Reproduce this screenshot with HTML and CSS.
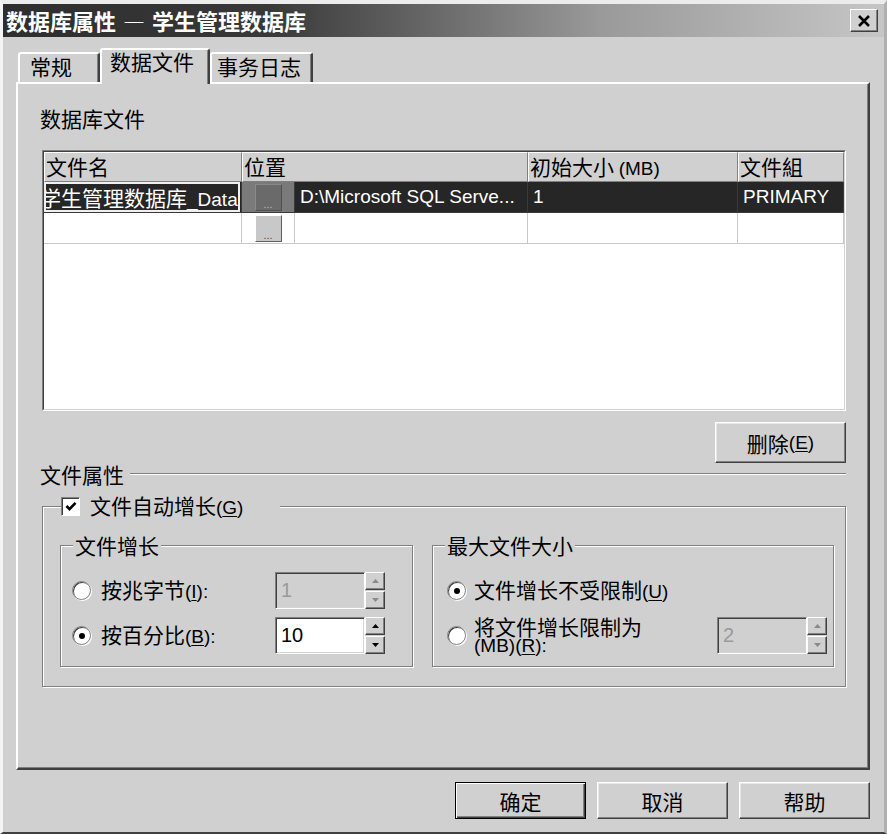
FILE: index.html
```html
<!DOCTYPE html>
<html lang="zh-CN">
<head>
<meta charset="utf-8">
<title>数据库属性</title>
<link rel="stylesheet" href="styles.css">
</head>
<body>
<div class="window">
  <div class="titlebar">
    <span class="title">数据库属性 — 学生管理数据库</span>
    <div class="close"><svg width="14" height="12" viewBox="0 0 14 12"><path d="M2 1 L12 11 M12 1 L2 11" stroke="#000" stroke-width="2.6" fill="none"/></svg></div>
  </div>
  <div class="tabs">
    <div class="tab t1">常规</div>
    <div class="tab t2">数据文件</div>
    <div class="tab t3">事务日志</div>
  </div>
  <div class="panel">
    <div class="label">数据库文件</div>
    <div class="grid">
      <div class="gridin">
        <div class="grow head">
          <div class="c c1">文件名</div>
          <div class="c c2">位置</div>
          <div class="c c3">初始大小 <span class="lt">(MB)</span></div>
          <div class="c c4">文件組</div>
        </div>
        <div class="grow sel">
          <div class="c c1"><div class="edit"><span class="et">学生管理数据库<span class="lt">_Data</span></span></div></div>
          <div class="c c2"><div class="bc"><div class="eb">...</div></div><div class="loc lt">D:\Microsoft SQL Serve...</div></div>
          <div class="c c3 lt">1</div>
          <div class="c c4 lt">PRIMARY</div>
        </div>
        <div class="grow">
          <div class="c c1"></div>
          <div class="c c2"><div class="bc"><div class="eb">...</div></div><div class="loc"></div></div>
          <div class="c c3"></div>
          <div class="c c4"></div>
        </div>
      </div>
    </div>
    <div class="actions"><div class="btn">删除<span class="lt">(<u>E</u>)</span></div></div>
    <div class="sep"><span>文件属性</span><i class="line"></i></div>
    <fieldset class="outer">
      <legend class="olegend">
        <span class="check"><svg width="12" height="11" viewBox="0 0 12 11"><path d="M1.5 5 L4.5 8.2 L10.5 1.8" stroke="#000" stroke-width="2.6" fill="none"/></svg></span>
        <span>文件自动增长<span class="lt">(<u>G</u>)</span></span>
      </legend>
      <div class="groups">
        <fieldset class="inner g1">
          <legend class="ilegend">文件增长</legend>
          <div class="opt">
            <span class="radio"></span>
            <span class="olabel">按兆字节<span class="lt">(<u>I</u>):</span></span>
            <div class="spin dis">
              <div class="field">1</div>
              <div class="arrows">
                <div class="arrow"><svg width="7" height="4" viewBox="0 0 7 4"><polygon points="0,4 3.5,0 7,4" fill="#8a8a8a"/></svg></div>
                <div class="arrow"><svg width="7" height="4" viewBox="0 0 7 4"><polygon points="0,0 3.5,4 7,0" fill="#8a8a8a"/></svg></div>
              </div>
            </div>
          </div>
          <div class="opt">
            <span class="radio on"></span>
            <span class="olabel">按百分比<span class="lt">(<u>B</u>):</span></span>
            <div class="spin">
              <div class="field">10</div>
              <div class="arrows">
                <div class="arrow"><svg width="7" height="4" viewBox="0 0 7 4"><polygon points="0,4 3.5,0 7,4" fill="#000"/></svg></div>
                <div class="arrow"><svg width="7" height="4" viewBox="0 0 7 4"><polygon points="0,0 3.5,4 7,0" fill="#000"/></svg></div>
              </div>
            </div>
          </div>
        </fieldset>
        <fieldset class="inner g2">
          <legend class="ilegend">最大文件大小</legend>
          <div class="opt">
            <span class="radio on"></span>
            <span class="olabel">文件增长不受限制<span class="lt">(<u>U</u>)</span></span>
          </div>
          <div class="opt">
            <span class="radio"></span>
            <span class="olabel two"><span class="l1">将文件增长限制为</span><span class="l2 lt">(MB)(<u>R</u>):</span></span>
            <div class="spin dis">
              <div class="field">2</div>
              <div class="arrows">
                <div class="arrow"><svg width="7" height="4" viewBox="0 0 7 4"><polygon points="0,4 3.5,0 7,4" fill="#8a8a8a"/></svg></div>
                <div class="arrow"><svg width="7" height="4" viewBox="0 0 7 4"><polygon points="0,0 3.5,4 7,0" fill="#8a8a8a"/></svg></div>
              </div>
            </div>
          </div>
        </fieldset>
      </div>
    </fieldset>
  </div>
  <div class="footer">
    <div class="btn def">确定</div>
    <div class="btn">取消</div>
    <div class="btn">帮助</div>
  </div>
</div>
</body>
</html>
```

FILE: styles.css
```css
* { box-sizing: border-box; }
html, body { margin: 0; padding: 0; }
body {
  width: 887px;
  height: 834px;
  overflow: hidden;
  background: #d0d0d0;
  font-family: "Noto Sans CJK SC", "Liberation Sans", sans-serif;
  font-size: 21px;
  line-height: 24px;
  color: #000;
}
u { text-decoration-thickness: 1px; text-underline-offset: 2px; }
.lt { font-family: "Liberation Sans", "Noto Sans CJK SC", sans-serif; font-size: 19px; }

.window {
  width: 887px;
  height: 834px;
  border-style: solid;
  border-width: 4px 3px 2px 3px;
  border-color: #ececec #b0b0b0 #404040 #f4f4f4;
  display: flex;
  flex-direction: column;
}

.titlebar {
  flex: none;
  height: 33px;
  display: flex;
  align-items: center;
  justify-content: space-between;
  padding: 0 6px 0 3px;
  background: linear-gradient(90deg, #2e2e2e 0%, #383838 30%, #9a9a9a 68%, #c6c6c6 100%);
}
.title {
  color: #fff;
  font-weight: bold;
  font-size: 22px;
  line-height: 33px;
  word-spacing: 2px;
}
.close {
  width: 28px;
  height: 23px;
  display: flex;
  align-items: center;
  justify-content: center;
  background: #d0d0d0;
  border: 1px solid;
  border-color: #fff #404040 #404040 #fff;
  box-shadow: inset -1px -1px #808080;
}

.tabs {
  flex: none;
  height: 45px;
  display: flex;
  align-items: flex-end;
  padding-left: 15px;
}
.tab {
  height: 30px;
  border: 2px solid;
  border-bottom: none;
  border-color: #fff #404040 transparent #fff;
  border-radius: 3px 3px 0 0;
  box-shadow: inset -1px 0 #808080;
  line-height: 24px;
  background: #d0d0d0;
}
.t1 { width: 82px; padding-left: 10px; }
.t2 {
  width: 110px;
  height: 36px;
  margin-bottom: -2px;
  position: relative;
  z-index: 1;
  padding-left: 8px;
  line-height: 22px;
}
.t3 { width: 103px; padding-left: 5px; }

.panel {
  flex: none;
  height: 688px;
  margin: 0 14px 0 13px;
  border: 2px solid;
  border-color: #fff #404040 #404040 #fff;
  box-shadow: inset -1px -1px #808080;
  padding: 22px 22px 0 24px;
}
.label { margin-left: -2px; line-height: 24px; }

.grid {
  height: 261px;
  margin-top: 20px;
  border: 1px solid;
  border-color: #808080 #fff #fff #808080;
}
.gridin {
  height: 100%;
  border: 1px solid;
  border-color: #404040 #d4d4d4 #d4d4d4 #404040;
  background: #fff;
  overflow: hidden;
}
.grow { display: flex; height: 31px; }
.c {
  flex: none;
  border-right: 1px solid #c8c8c8;
  border-bottom: 1px solid #c8c8c8;
  white-space: nowrap;
  overflow: hidden;
  padding-left: 4px;
  line-height: 30px;
}
.c1 { width: 198px; }
.c2 { width: 286px; }
.c3 { width: 210px; }
.c4 { flex: 1; }
.head { height: 30px; }
.head .c {
  background: #d0d0d0;
  border-top: 1px solid #fff;
  border-left: 1px solid #fff;
  border-right: 1px solid #808080;
  border-bottom: 1px solid #808080;
  padding-left: 1px;
  line-height: 27px;
}
.sel { background: #262626; color: #fff; }
.sel .c { border-color: #3a3a3a; }
.sel .c1 { padding: 0 1px 0 0; }
.edit {
  height: 30px;
  border: 2px solid #f0f0f0;
  overflow: hidden;
  line-height: 26px;
  white-space: nowrap;
}
.et { display: inline-block; margin-left: -6px; }
.c2 { display: flex; padding-left: 0; }
.bc {
  width: 53px;
  flex: none;
  display: flex;
  align-items: center;
  justify-content: center;
  border-right: 1px solid #c8c8c8;
}
.sel .bc { background: #7a7a7a; border-right-color: #3a3a3a; }
.eb {
  width: 27px;
  height: 27px;
  display: flex;
  align-items: flex-end;
  justify-content: center;
  font-family: "Liberation Sans", sans-serif;
  font-size: 11px;
  line-height: 12px;
  color: #505050;
  background: #c8c8c8;
  border: 1px solid;
  border-color: #fff #606060 #606060 #fff;
}
.sel .eb { background: #6a6a6a; color: #b8b8b8; border-color: #8a8a8a #505050 #505050 #8a8a8a; }
.loc { padding-left: 5px; }
.sel .c3, .sel .c4 { padding-left: 5px; }

.btn {
  width: 131px;
  height: 37px;
  display: flex;
  align-items: center;
  justify-content: center;
  background: #d0d0d0;
  border: 1px solid;
  border-color: #fff #404040 #404040 #fff;
  box-shadow: inset -1px -1px #808080, inset 1px 1px #e8e8e8;
  line-height: 24px;
}
.btn.def {
  border-color: #000;
  box-shadow: inset 1px 1px #fff, inset -1px -1px #404040, inset -2px -2px #808080;
}
.actions { display: flex; justify-content: flex-end; margin-top: 11px; }
.actions .btn { height: 41px; }

.sep {
  display: flex;
  align-items: center;
  gap: 6px;
  margin-left: -2px;
  line-height: 22px;
}
.line {
  flex: 1;
  height: 2px;
  border-top: 1px solid #808080;
  border-bottom: 1px solid #fff;
}

fieldset { margin: 0; min-inline-size: 0; }
.outer {
  margin-top: 8px;
  padding: 14px 11px 19px 17px;
  border: 1px solid #808080;
  box-shadow: inset 1px 1px #fff, 1px 1px 0 #fff;
}
.olegend {
  display: flex;
  align-items: center;
  gap: 10px;
  margin-left: 1px;
  padding: 0 37px 0 0;
  line-height: 24px;
  background: #d0d0d0;
}
.check {
  width: 19px;
  height: 19px;
  display: flex;
  align-items: center;
  justify-content: center;
  background: #fff;
  border: 1px solid;
  border-color: #808080 #fff #fff #808080;
  box-shadow: inset 1px 1px #404040;
}
.groups { display: flex; gap: 19px; }
.inner {
  padding: 16px 0 12px 0;
  border: 1px solid #808080;
  box-shadow: inset 1px 1px #fff, 1px 1px 0 #fff;
}
.g1 { width: 353px; flex: none; }
.g2 { flex: 1; }
.ilegend {
  margin-left: 12px;
  padding: 0 2px;
  line-height: 22px;
  background: #d0d0d0;
}
.opt {
  height: 37px;
  display: flex;
  align-items: center;
}
.opt + .opt { margin-top: 8px; }
.g1 .opt { padding-left: 11px; }
.g2 .opt { padding-left: 14px; }
.radio {
  flex: none;
  position: relative;
  width: 19px;
  height: 19px;
  border-radius: 50%;
  background: #fff;
  border: 1px solid #808080;
  box-shadow: inset 1px 1px #404040, 1px 1px 0 #fff;
}
.radio.on::after {
  content: "";
  position: absolute;
  left: 5.5px;
  top: 5.5px;
  width: 6px;
  height: 6px;
  border-radius: 50%;
  background: #000;
}
.olabel { flex: none; }
.g1 .olabel { width: 174px; margin-left: 10px; }
.g2 .olabel { width: 243px; margin-left: 8px; }
.olabel.two { display: flex; flex-direction: column; }
.l1 { line-height: 20px; }
.l2 { line-height: 20px; }

.spin { display: flex; flex: none; }
.field {
  width: 90px;
  height: 37px;
  border: 1px solid;
  border-color: #808080 #fff #fff #808080;
  box-shadow: inset 1px 1px #404040, inset -1px -1px #d4d4d4;
  background: #fff;
  padding-left: 5px;
  font-family: "Liberation Sans", sans-serif;
  font-size: 20px;
  line-height: 35px;
}
.spin.dis .field { background: #d0d0d0; color: #9a9a9a; }
.arrows {
  width: 20px;
  display: flex;
  flex-direction: column;
  gap: 1px;
}
.arrow {
  flex: 1;
  display: flex;
  align-items: center;
  justify-content: center;
  background: #d0d0d0;
  border: 1px solid;
  border-color: #fff #404040 #404040 #fff;
  box-shadow: inset -1px -1px #808080;
}

.footer {
  flex: 1;
  display: flex;
  justify-content: flex-end;
  align-items: flex-start;
  gap: 11px;
  padding: 12px 14px 0 0;
}
```
